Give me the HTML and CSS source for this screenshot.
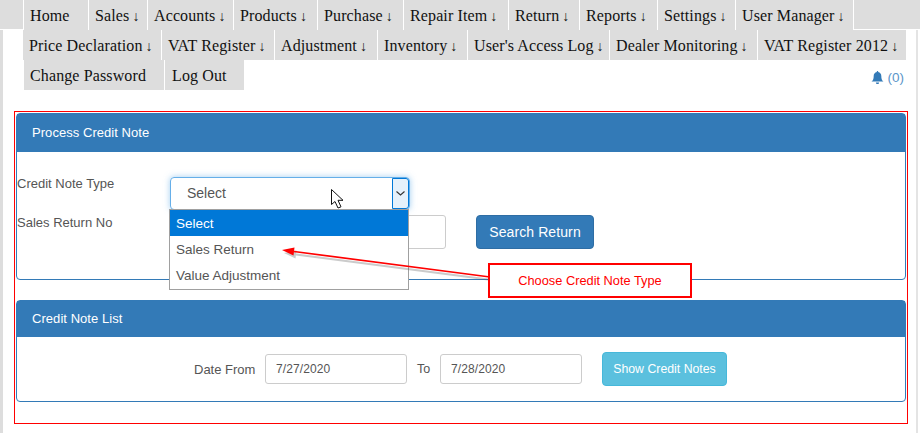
FILE: index.html
```html
<!DOCTYPE html>
<html lang="en">
<head>
    <meta charset="UTF-8" />
    <title>Process Credit Note</title>
    <link rel="stylesheet" href="styles.css">
</head>
<body>
    <div class="menu-top">
        <a class="menu-item">Home</a>
        <a class="menu-item">Sales<i>↓</i></a>
        <a class="menu-item">Accounts<i>↓</i></a>
        <a class="menu-item">Products<i>↓</i></a>
        <a class="menu-item">Purchase<i>↓</i></a>
        <a class="menu-item">Repair Item<i>↓</i></a>
        <a class="menu-item">Return<i>↓</i></a>
        <a class="menu-item">Reports<i>↓</i></a>
        <a class="menu-item">Settings<i>↓</i></a>
        <a class="menu-item">User Manager<i>↓</i></a>
    </div>

    <div class="page">
        <div class="menu-second">
            <a class="menu-item">Price Declaration<i>↓</i></a>
            <a class="menu-item">VAT Register<i>↓</i></a>
            <a class="menu-item">Adjustment<i>↓</i></a>
            <a class="menu-item">Inventory<i>↓</i></a>
            <a class="menu-item">User's Access Log<i>↓</i></a>
            <a class="menu-item">Dealer Monitoring<i>↓</i></a>
            <a class="menu-item">VAT Register 2012<i>↓</i></a>
        </div>

        <div class="menu-third">
            <div class="menu-third-items">
                <a class="menu-item">Change Password</a>
                <a class="menu-item">Log Out</a>
            </div>
            <div class="notify">
                <svg width="13" height="13" viewBox="0 0 13 13"><path fill="#337ab7" d="M6.5 0C7 0 7.3.4 7.2 1 9.2 1.4 10.3 3 10.3 5c0 3 .7 4.400 2.200 5.600H.5C2 9.400 2.700 8 2.700 5c0-2 1.100-3.600 3.100-4C5.700.4 6 0 6.500 0zM4.900 11.400h3.200c0 .9-.7 1.600-1.600 1.600s-1.600-.7-1.600-1.600z"/></svg>
                <span>(0)</span>
            </div>
        </div>

        <div class="frame">
            <div class="panel panel-process">
                <div class="panel-heading">Process Credit Note</div>
                <div class="panel-body">
                    <div class="form-row">
                        <label class="form-label">Credit Note Type</label>
                        <div class="select-box">
                            <span class="select-value">Select</span>
                            <span class="select-arrow">
                                <svg width="9" height="5" viewBox="0 0 9 5"><path d="M.5.5l4 3.500 4-3.500" fill="none" stroke="#333" stroke-width="1.100"/></svg>
                            </span>
                            <ul class="select-options">
                                <li class="selected">Select</li>
                                <li>Sales Return</li>
                                <li>Value Adjustment</li>
                            </ul>
                        </div>
                    </div>
                    <div class="form-row form-row-second">
                        <label class="form-label">Sales Return No</label>
                        <input class="text-input return-input" type="text" />
                        <button class="btn btn-primary">Search Return</button>
                    </div>
                </div>
            </div>

            <div class="panel panel-list">
                <div class="panel-heading">Credit Note List</div>
                <div class="panel-body date-row">
                    <span class="date-label">Date From</span>
                    <input class="text-input date-input" type="text" value="7/27/2020" />
                    <span class="to-label">To</span>
                    <input class="text-input date-input" type="text" value="7/28/2020" />
                    <button class="btn btn-info">Show Credit Notes</button>
                </div>
            </div>

            <!-- annotation drawn on top of the screenshot -->
            <svg class="arrow-overlay" width="480" height="60" viewBox="0 0 480 60">
                <g transform="translate(2 3)" opacity="0.3">
                    <path d="M215 38 19 12.500" stroke="#555" stroke-width="2" fill="none"/>
                    <path d="M7 11l12.500-2.500-1 8z" fill="#555"/>
                </g>
                <path d="M215 38 19 12.500" stroke="#f00" stroke-width="1.700" fill="none"/>
                <path d="M7 11l12.500-2.500-1 8z" fill="#f00"/>
            </svg>
            <div class="callout">Choose Credit Note Type</div>
            <svg class="cursor" width="14" height="20" viewBox="0 0 14 20"><path d="M.5.5v15l3.500-3 3 6.500 3-1.200-3-6.500h5z" fill="#fff" stroke="#111" stroke-width="1"/></svg>
        </div>
    </div>
</body>
</html>
```

FILE: styles.css
```css
/* General Reset */
* {
    box-sizing: border-box;
    margin: 0;
    padding: 0;
}

body {
    background-color: #fff;
    color: #555;
    font-family: 'Liberation Sans', Arial, sans-serif;
    font-size: 14px;
    height: 433px;
    overflow: hidden;
}

/* Menu */
.menu-top {
    display: grid;
    grid-template-columns: 65px 59px 86px 84px 86px 105px 71px 78px 78px 119px;
    height: 29px;
    padding-left: 23px;
    background-color: #ddd;
}

.menu-item {
    display: block;
    height: 30px;
    padding-left: 6px;
    background-color: #ddd;
    border-left: 1px solid #fff;
    color: #111;
    font-family: 'Liberation Serif', Georgia, serif;
    font-size: 16px;
    letter-spacing: 0.12px;
    line-height: 31px;
    white-space: nowrap;
}

.menu-item i {
    margin-left: 3px;
    font-family: 'Noto Sans', sans-serif;
    font-style: normal;
    font-weight: 300;
    font-size: 14px;
    letter-spacing: 0;
    line-height: 0;
}

.menu-top .menu-item:last-child {
    border-right: 1px solid #fff;
}

.page {
    height: 404px;
    margin-right: 2px;
    border-left: 3px solid #ddd;
    border-right: 2px solid #e4e4e4;
}

.menu-second {
    display: grid;
    grid-template-columns: 139px 113px 103px 90px 142px 148px 149px;
    margin-top: 1px;
    margin-left: 20px;
}

.menu-second .menu-item {
    border-left: 0;
    border-right: 1px solid #fff;
    padding-left: 6px;
}

.menu-third {
    display: flex;
    justify-content: space-between;
    height: 30px;
}

.menu-third-items {
    display: grid;
    grid-template-columns: 141px 79px;
    margin-left: 21px;
}

.menu-third-items .menu-item {
    border-left: 0;
    border-right: 1px solid #fff;
}

.menu-third-items .menu-item:last-child {
    padding-left: 7px;
    border-right: 0;
}

.notify {
    display: flex;
    align-items: center;
    gap: 4px;
    height: 30px;
    margin-right: 12px;
    padding-top: 4px;
    color: #5b95c9;
    font-size: 13.500px;
}

/* Red frame */
.frame {
    position: relative;
    width: 894px;
    height: 313px;
    margin-top: 21px;
    margin-left: 11px;
    padding: 1px 1px 0;
    border: 1px solid #f00;
}

/* Panels */
.panel {
    width: 890px;
    border: 1px solid #337ab7;
    border-radius: 4px;
    background-color: #fff;
}

.panel-process {
    height: 167px;
}

.panel-list {
    height: 102px;
    margin-top: 20px;
}

.panel-heading {
    padding-left: 15px;
    background-color: #337ab7;
    color: #fff;
    font-size: 13px;
    letter-spacing: 0.05px;
}

.panel-process .panel-heading {
    height: 38px;
    line-height: 38px;
}

.panel-list .panel-heading {
    height: 36px;
    line-height: 36px;
}

.form-row {
    display: flex;
    align-items: flex-start;
}

.panel-process .panel-body {
    padding-top: 25px;
}

.form-row-second {
    margin-top: 5px;
}

.form-label {
    width: 153px;
    font-size: 13px;
    line-height: 14px;
}

.form-row-second .form-label {
    padding-top: 1px;
}

.select-box {
    position: relative;
    display: flex;
    width: 240px;
    height: 33px;
    border: 1px solid #66afe9;
    border-radius: 4px;
    box-shadow: 0 0 6px rgba(102, 175, 233, 0.6);
}

.select-value {
    flex: 1;
    padding-left: 16px;
    line-height: 30px;
}

.select-arrow {
    display: flex;
    align-items: center;
    justify-content: center;
    width: 17px;
    background-color: #e5f1fb;
    border: 1px solid #0078d7;
    border-radius: 0 3px 3px 0;
}

.select-options {
    position: absolute;
    top: 31px;
    left: -2px;
    width: 240px;
    height: 81px;
    list-style: none;
    background-color: #fff;
    border: 1px solid #a0a0a0;
}

.select-options li {
    height: 26px;
    padding-left: 6px;
    font-size: 13.500px;
    line-height: 28px;
}

.select-options .selected {
    background-color: #0078d7;
    color: #fff;
}

.text-input {
    height: 30px;
    padding: 0 10px;
    background-color: #fff;
    border: 1px solid #ccc;
    border-radius: 3px;
    color: #555;
    font-family: 'Liberation Sans', Arial, sans-serif;
    font-size: 12px;
    letter-spacing: 0.1px;
}

.return-input {
    width: 276px;
    height: 34px;
}

.btn {
    border: 1px solid transparent;
    border-radius: 4px;
    color: #fff;
    font-family: 'Liberation Sans', Arial, sans-serif;
}

.btn-primary {
    width: 118px;
    height: 34px;
    margin-left: 30px;
    background-color: #337ab7;
    border-color: #2e6da4;
    font-size: 14px;
    letter-spacing: 0.1px;
}

.btn-info {
    width: 125px;
    height: 34px;
    margin-left: 20px;
    background-color: #5bc0de;
    border-color: #46b8da;
    font-size: 12.300px;
}

/* Date filter */
.date-row {
    display: flex;
    align-items: center;
    height: 64px;
    padding-left: 177px;
}

.date-label {
    width: 71px;
    font-size: 13px;
}

.date-input {
    width: 142px;
}

.to-label {
    width: 33px;
    padding-left: 10px;
    font-size: 12.500px;
}

/* Annotation */
.callout {
    position: absolute;
    top: 151px;
    left: 473px;
    width: 204px;
    height: 35px;
    border: 2px solid #f00;
    background-color: #fff;
    color: #f00;
    font-size: 12.800px;
    line-height: 32px;
    text-align: center;
}

.arrow-overlay {
    position: absolute;
    top: 127px;
    left: 260px;
}

.cursor {
    position: absolute;
    top: 77px;
    left: 316px;
}
```
